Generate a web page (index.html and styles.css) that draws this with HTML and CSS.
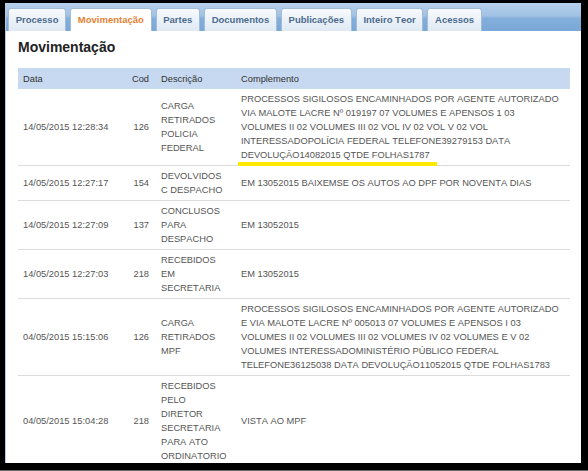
FILE: index.html
```html
<!DOCTYPE html>
<html lang="pt-BR">
<head>
    <meta charset="UTF-8">
    <meta name="viewport" content="width=device-width, initial-scale=1.0">
    <title>Movimentação</title>
    <link rel="stylesheet" href="styles.css">
</head>
<body>
    <div class="janela">
        <ul class="abas">
            <li>Processo</li>
            <li class="ativa">Movimentação</li>
            <li>Partes</li>
            <li>Documentos</li>
            <li>Publicações</li>
            <li>Inteiro Teor</li>
            <li>Acessos</li>
        </ul>

        <div class="conteudo">
            <h1 class="titulo">Movimentação</h1>

            <table class="movimentos">
                <colgroup>
                    <col class="col-data">
                    <col class="col-cod">
                    <col class="col-desc">
                    <col class="col-compl">
                </colgroup>
                <thead>
                    <tr>
                        <th>Data</th>
                        <th class="cod">Cod</th>
                        <th class="desc">Descrição</th>
                        <th class="compl">Complemento</th>
                    </tr>
                </thead>
                <tbody>
                    <tr>
                        <td>14/05/2015 12:28:34</td>
                        <td class="cod">126</td>
                        <td class="desc">CARGA RETIRADOS POLICIA FEDERAL</td>
                        <td class="compl">PROCESSOS SIGILOSOS ENCAMINHADOS POR AGENTE AUTORIZADO VIA MALOTE LACRE Nº 019197 07 VOLUMES E APENSOS 1 03 VOLUMES II 02 VOLUMES III 02 VOL IV 02 VOL V 02 VOL INTERESSADOPOLÍCIA FEDERAL TELEFONE39279153 DATA <span class="marca">DEVOLUÇÃO14082015 QTDE FOLHAS1787</span></td>
                    </tr>
                    <tr>
                        <td>14/05/2015 12:27:17</td>
                        <td class="cod">154</td>
                        <td class="desc">DEVOLVIDOS C DESPACHO</td>
                        <td class="compl">EM 13052015 BAIXEMSE OS AUTOS AO DPF POR NOVENTA DIAS</td>
                    </tr>
                    <tr>
                        <td>14/05/2015 12:27:09</td>
                        <td class="cod">137</td>
                        <td class="desc">CONCLUSOS PARA DESPACHO</td>
                        <td class="compl">EM 13052015</td>
                    </tr>
                    <tr>
                        <td>14/05/2015 12:27:03</td>
                        <td class="cod">218</td>
                        <td class="desc">RECEBIDOS EM SECRETARIA</td>
                        <td class="compl">EM 13052015</td>
                    </tr>
                    <tr>
                        <td>04/05/2015 15:15:06</td>
                        <td class="cod">126</td>
                        <td class="desc">CARGA RETIRADOS MPF</td>
                        <td class="compl">PROCESSOS SIGILOSOS ENCAMINHADOS POR AGENTE AUTORIZADO E VIA MALOTE LACRE Nº 005013 07 VOLUMES E APENSOS I 03 VOLUMES II 02 VOLUMES III 02 VOLUMES IV 02 VOLUMES E V 02 VOLUMES INTERESSADOMINISTÉRIO PÚBLICO FEDERAL TELEFONE36125038 DATA DEVOLUÇÃO11052015 QTDE FOLHAS1783</td>
                    </tr>
                    <tr>
                        <td>04/05/2015 15:04:28</td>
                        <td class="cod">218</td>
                        <td class="desc">RECEBIDOS PELO DIRETOR SECRETARIA PARA ATO ORDINATORIO</td>
                        <td class="compl">VISTA AO MPF</td>
                    </tr>
                </tbody>
            </table>
        </div>
    </div>
</body>
</html>
```
FILE: styles.css
```css
body {
    margin: 0;
    height: 470px;
    overflow: hidden;
    background: #000;
    border-bottom: 1px solid #6a6a6a;
    font-family: "Liberation Sans", Arial, sans-serif;
    font-kerning: none;
}
.janela {
    margin: 3px 7px 0 5px;
    height: 460px;
    overflow: hidden;
    background: #fff;
    border-left: 1px solid #b9cbe0;
}

/* abas */
.abas {
    list-style: none;
    margin: 0;
    padding: 5px 0 0 2px;
    height: 28px;
    box-sizing: border-box;
    display: flex;
    align-items: flex-end;
    gap: 4px;
    background: linear-gradient(to bottom, #b6d0ec 0%, #a2c2e5 45%, #84afdb 55%, #79a7d7 100%);
}
.abas li {
    height: 23px;
    box-sizing: border-box;
    padding: 0 6.7px;
    line-height: 22px;
    border: 1px solid #a3bdd9;
    border-bottom: 0;
    border-radius: 3px 3px 0 0;
    background: linear-gradient(to bottom, #f7fafd, #e0e9f3);
    color: #4a6b8e;
    font-size: 9.5px;
    font-weight: bold;
}
.abas li.ativa {
    background: #fff;
    color: #e57f32;
}

/* conteudo */
.conteudo {
    padding: 6px 11px 0 12px;
}
.titulo {
    margin: 0 0 11px;
    font-size: 14px;
    line-height: 20px;
    color: #222;
}
.movimentos {
    width: 100%;
    border-collapse: collapse;
    table-layout: fixed;
    font-size: 9.3px;
    color: #555;
}
.col-data { width: 104px; }
.col-cod { width: 33px; }
.col-desc { width: 80px; }
.col-compl { width: 335px; }
.movimentos th {
    height: 21px;
    padding: 0 5px;
    background: #c6d9f1;
    color: #333;
    font-weight: normal;
    text-align: left;
}
.movimentos td {
    padding: 3px 5px;
    line-height: 14px;
    vertical-align: middle;
    border-bottom: 1px solid #dcdcdc;
}
.movimentos .cod {
    text-align: right;
    padding-right: 6px;
}
.movimentos .desc {
    padding-left: 6px;
    padding-right: 6.5px;
}
.movimentos .compl {
    padding-left: 6px;
    padding-right: 9px;
}
.marca {
    padding: 0 7px 2px 3px;
    margin: 0 -7px 0 -3px;
    border-bottom: 4px solid #ffe800;
}
```
